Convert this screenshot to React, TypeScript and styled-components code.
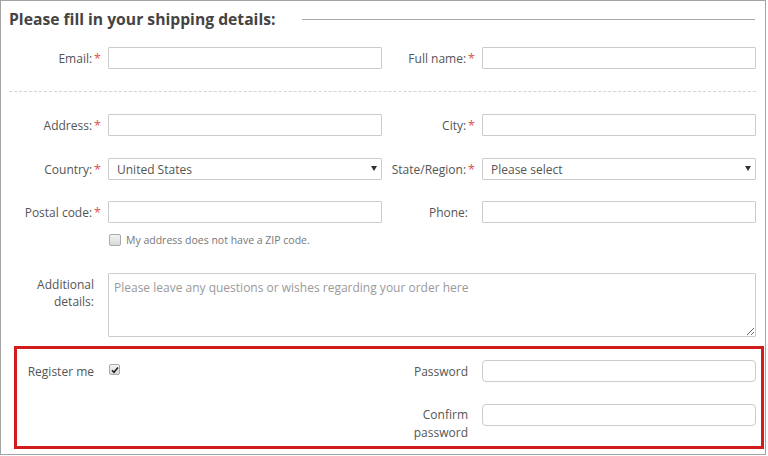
import React from "react";
import styled, { createGlobalStyle } from "styled-components";

const GlobalStyle = createGlobalStyle`
  html, body {
    margin: 0;
    padding: 0;
    background: #fff;
  }
  body {
    font-family: "Open Sans", "DejaVu Sans", sans-serif;
  }
`;

const Frame = styled.div`
  box-sizing: border-box;
  width: 766px;
  height: 455px;
  border: 1px solid #a3a3a3;
  padding: 0 9px 0 8px;
  background: #fff;
  overflow: hidden;
`;

const Header = styled.div`
  display: flex;
  align-items: center;
  height: 22px;
  margin-top: 7px;
`;

const Title = styled.h2`
  margin: 0;
  font-size: 15.7px;
  font-weight: 700;
  color: #444;
  white-space: nowrap;
`;

const TitleRule = styled.div`
  flex: 1;
  height: 1px;
  background: #aaa;
  margin: 0 1px 0 27px;
`;

const Row = styled.div<{ $lead?: number; $top: number; $start?: boolean }>`
  display: grid;
  grid-template-columns: ${(p) => p.$lead ?? 99}px 274px 100px 274px;
  align-items: ${(p) => (p.$start ? "start" : "center")};
  margin-top: ${(p) => p.$top}px;
`;

const Label = styled.label<{ $pad?: number; $lh?: number }>`
  display: block;
  text-align: right;
  padding-right: 14px;
  padding-top: ${(p) => p.$pad ?? 0}px;
  font-size: 12px;
  line-height: ${(p) => p.$lh ?? 17}px;
  color: #555;
`;

const Req = styled.span`
  color: #d9534f;
  margin: 0 -7px 0 2px;
  font-size: 12.5px;
`;

const TextInput = styled.input<{ $round?: boolean }>`
  box-sizing: border-box;
  display: block;
  width: 100%;
  height: 22px;
  margin: 0;
  border: 1px solid #ccc;
  border-radius: ${(p) => (p.$round ? 4 : 1)}px;
  padding: 0 9px;
  font: 12px "Open Sans", sans-serif;
  color: #555;
  background: #fff;
  outline: none;
`;

const SelectBox = styled.div`
  position: relative;
  height: 22px;
`;

const Select = styled.select`
  box-sizing: border-box;
  display: block;
  appearance: none;
  width: 100%;
  height: 22px;
  margin: 0;
  border: 1px solid #ccc;
  border-radius: 1px;
  padding: 0 0 0 8px;
  font: 12px "Open Sans", sans-serif;
  color: #555;
  background: #fff;
  outline: none;
`;

const Caret = styled.span`
  position: absolute;
  right: 5px;
  top: 8px;
  width: 0;
  height: 0;
  border-left: 3px solid transparent;
  border-right: 3px solid transparent;
  border-top: 5px solid #333;
  pointer-events: none;
`;

const Divider = styled.div`
  margin-top: 22px;
  border-top: 1px dashed #d4d4d4;
`;

const CheckLine = styled.label`
  grid-column: 2 / 5;
  display: flex;
  align-items: center;
  gap: 5px;
  margin-left: 1px;
  font-size: 10.5px;
  color: #777;
  height: 14px;
`;

const Box = styled.span<{ $size: number }>`
  box-sizing: border-box;
  display: inline-flex;
  align-items: center;
  justify-content: center;
  width: ${(p) => p.$size}px;
  height: ${(p) => p.$size}px;
  border: 1px solid #a9a9a9;
  border-radius: 2px;
  background: linear-gradient(#f4f4f4, #d9d9d9);
`;

const TextArea = styled.textarea`
  grid-column: 2 / 5;
  box-sizing: border-box;
  width: 100%;
  height: 64px;
  margin: 0;
  border: 1px solid #ccc;
  border-radius: 1px;
  padding: 5px 5px;
  font: 12px/17px "Open Sans", sans-serif;
  color: #555;
  outline: none;
  display: block;
  &::placeholder {
    color: #9a9a9a;
  }
`;

const Highlight = styled.div`
  margin: 9px -8px 0 5px;
  border: 3px solid #d21c1c;
  padding: 11px 5px 4px 0;
`;

const CheckCell = styled.div`
  display: flex;
  align-items: center;
  margin: -3px 0 0 1px;
`;

function Check({ checked, size }: { checked?: boolean; size: number }) {
  return (
    <Box $size={size}>
      {checked && (
        <svg width="8" height="8" viewBox="0 0 8 8">
          <path d="M1 4.2 L3 6.3 L7 1.5" fill="none" stroke="#222" strokeWidth="1.6" />
        </svg>
      )}
    </Box>
  );
}

function Field({ label, required }: { label: string; required?: boolean }) {
  return (
    <Label>
      {label}
      {required && <Req>*</Req>}
    </Label>
  );
}

export default function App() {
  return (
    <>
      <GlobalStyle />
      <Frame>
        <Header>
          <Title>Please fill in your shipping details:</Title>
          <TitleRule />
        </Header>

        <Row $top={17}>
          <Field label="Email:" required />
          <TextInput />
          <Field label="Full name:" required />
          <TextInput />
        </Row>

        <Divider />

        <Row $top={22}>
          <Field label="Address:" required />
          <TextInput />
          <Field label="City:" required />
          <TextInput />
        </Row>

        <Row $top={22}>
          <Field label="Country:" required />
          <SelectBox>
            <Select defaultValue="us">
              <option value="us">United States</option>
            </Select>
            <Caret />
          </SelectBox>
          <Field label="State/Region:" required />
          <SelectBox>
            <Select defaultValue="">
              <option value="">Please select</option>
            </Select>
            <Caret />
          </SelectBox>
        </Row>

        <Row $top={21}>
          <Field label="Postal code:" required />
          <TextInput />
          <Field label="Phone:" />
          <TextInput />
        </Row>

        <Row $top={10}>
          <span />
          <CheckLine>
            <Check size={12} />
            My address does not have a ZIP code.
          </CheckLine>
        </Row>

        <Row $top={26} $start>
          <Label $pad={3}>
            Additional
            <br />
            details:
          </Label>
          <TextArea placeholder="Please leave any questions or wishes regarding your order here" />
        </Row>

        <Highlight>
          <Row $top={0} $lead={91}>
            <Label>Register me</Label>
            <CheckCell>
              <Check size={11} checked />
            </CheckCell>
            <Label>Password</Label>
            <TextInput type="password" $round />
          </Row>
          <Row $top={22} $lead={91} $start>
            <span />
            <span />
            <Label $pad={2} $lh={18}>
              Confirm
              <br />
              password
            </Label>
            <TextInput type="password" $round />
          </Row>
        </Highlight>
      </Frame>
    </>
  );
}
